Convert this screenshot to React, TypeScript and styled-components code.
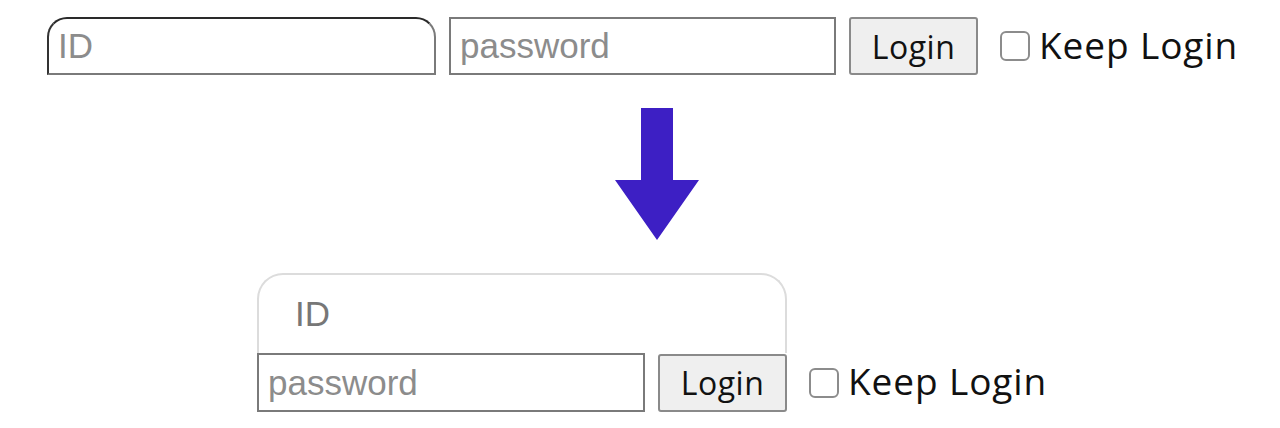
import styled, { createGlobalStyle } from "styled-components";

const GlobalStyle = createGlobalStyle`
  html, body {
    margin: 0;
    padding: 0;
    background: #ffffff;
  }
`;

const Page = styled.div`
  display: flex;
  flex-direction: column;
  padding: 17px 0 0 47px;
`;

const Row = styled.div`
  display: flex;
  align-items: center;
`;

const TextInput = styled.input<{ width: number; rounded?: boolean }>`
  box-sizing: border-box;
  width: ${(props) => props.width}px;
  height: 58px;
  margin: 0;
  padding: 0 0 0 9px;
  border: 2px solid #7a7a7a;
  border-radius: ${(props) => (props.rounded ? "20px 20px 0 0" : "0")};
  ${(props) =>
    props.rounded ? "border-top-color: #2a2a2a; border-left-color: #333;" : ""}
  background: #fff;
  font-family: "Liberation Sans", Arial, sans-serif;
  font-size: 35px;
  color: #333;
  outline: none;

  &::placeholder {
    color: #8c8c8c;
  }
`;

const IdBox = styled.input`
  box-sizing: border-box;
  width: 530px;
  height: 80px;
  margin: 0;
  padding: 0 0 0 36px;
  border: 2px solid #dcdcdc;
  border-bottom: none;
  border-radius: 26px 26px 0 0;
  background: #fff;
  font-family: "Liberation Sans", Arial, sans-serif;
  font-size: 35px;
  outline: none;

  &::placeholder {
    color: #777;
  }
`;

const LoginButton = styled.button`
  box-sizing: border-box;
  width: 129px;
  height: 58px;
  margin: 0 0 0 13px;
  padding: 0;
  border: 2px solid #8a8a8a;
  border-radius: 3px;
  background: #efefef;
  font-family: "Open Sans", sans-serif;
  font-size: 32px;
  letter-spacing: 0.5px;
  color: #111;
  cursor: pointer;
`;

const KeepLabel = styled.label`
  display: flex;
  align-items: center;
  margin: -4px 0 0 22px;
  font-family: "Open Sans", sans-serif;
  font-size: 37px;
  letter-spacing: 0.9px;
  color: #111;
  gap: 9px;
`;

const Check = styled.input`
  appearance: none;
  box-sizing: border-box;
  width: 30px;
  height: 30px;
  margin: 4px 0 0;
  border: 2px solid #8c8c8c;
  border-radius: 6px;
  background: #fff;
`;

const ArrowWrap = styled.div`
  display: flex;
  padding: 33px 0 0 568px;
  height: 132px;
`;

const Stack = styled.div`
  display: flex;
  flex-direction: column;
  margin: 33px 0 0 210px;
`;

function LoginBar() {
  return (
    <>
      <LoginButton>Login</LoginButton>
      <KeepLabel>
        <Check type="checkbox" />
        Keep Login
      </KeepLabel>
    </>
  );
}

export default function App() {
  return (
    <>
      <GlobalStyle />
      <Page>
        <Row>
          <TextInput width={389} rounded placeholder="ID" />
          <TextInput width={387} placeholder="password" style={{ marginLeft: 13 }} />
          <LoginBar />
        </Row>
        <ArrowWrap>
          <svg width="84" height="132" viewBox="0 0 84 132">
            <path d="M26 0 H58 V72 H84 L42 132 L0 72 H26 Z" fill="#3d1fc4" />
          </svg>
        </ArrowWrap>
        <Stack>
          <IdBox placeholder="ID" />
          <Row>
            <TextInput width={388} placeholder="password" style={{ height: 59 }} />
            <LoginBar />
          </Row>
        </Stack>
      </Page>
    </>
  );
}
